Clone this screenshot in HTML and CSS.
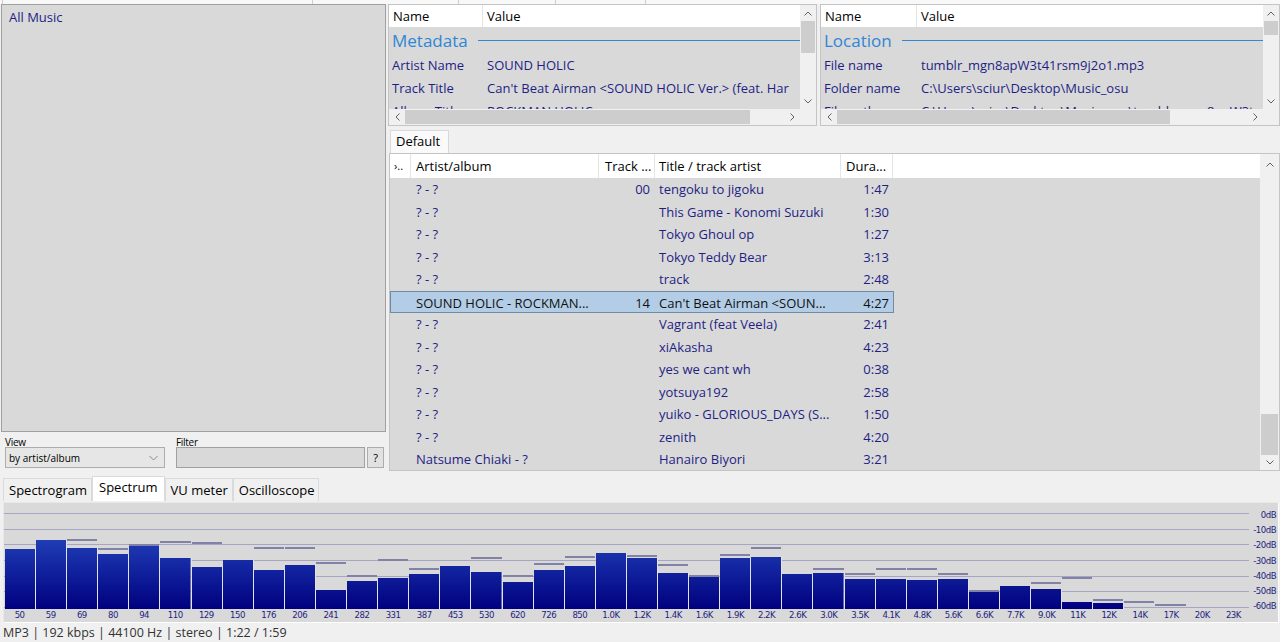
FILE: index.html
```html
<!DOCTYPE html>
<html lang="en">
<head>
  <meta charset="UTF-8">
  <title>foobar2000</title>
  <meta name="viewport" content="width=device-width, initial-scale=1.0">
  <link rel="stylesheet" href="styles.css">
</head>
<body>

  <div class="toolbar-edge">
    <span class="tb tb-1"></span>
    <span class="tb tb-2"></span>
    <span class="tb tb-3"></span>
    <span class="tb tb-4"></span>
    <span class="tb tb-5"></span>
  </div>

  <div class="main">
    <!-- library side -->
    <div class="side">
      <div class="library">
        <div class="lib-item">All Music</div>
      </div>
      <div class="lib-controls">
        <div class="field view-field">
          <div class="field-label">View</div>
          <div class="combo">
            <span>by artist/album</span>
            <svg width="9" height="6" viewBox="0 0 9 6"><path d="M0.5 1 L4.5 5 L8.5 1" fill="none" stroke="#8a8a8a" stroke-width="1"/></svg>
          </div>
        </div>
        <div class="field filter-field">
          <div class="field-label">Filter</div>
          <div class="filter-row">
            <div class="filter-input"></div>
            <div class="help-btn">?</div>
          </div>
        </div>
      </div>
    </div>

    <div class="content">
      <div class="props-row">
        <!-- metadata properties -->
        <div class="props props-left">
          <div class="props-view">
            <div class="lv-header">
              <div class="hcell name-col">Name</div>
              <div class="hcell">Value</div>
            </div>
            <div class="group-row"><span>Metadata</span><i class="group-line"></i></div>
            <div class="prop-row"><span class="name-col">Artist Name</span><span class="val">SOUND HOLIC</span></div>
            <div class="prop-row"><span class="name-col">Track Title</span><span class="val">Can't Beat Airman &lt;SOUND HOLIC Ver.&gt; (feat. Har</span></div>
            <div class="prop-row"><span class="name-col">Album Title</span><span class="val">ROCKMAN HOLIC</span></div>
          </div>
          <div class="vscroll">
            <div class="arrow"><svg width="8" height="5" viewBox="0 0 8 5"><path d="M0.5 4.5 L4 1 L7.5 4.5" fill="none" stroke="#606060"/></svg></div>
            <div class="track"><div class="thumb thumb-meta"></div></div>
            <div class="arrow"><svg width="8" height="5" viewBox="0 0 8 5"><path d="M0.5 0.5 L4 4 L7.5 0.5" fill="none" stroke="#606060"/></svg></div>
          </div>
          <div class="hscroll">
            <div class="arrow"><svg width="5" height="8" viewBox="0 0 5 8"><path d="M4.5 0.5 L1 4 L4.5 7.5" fill="none" stroke="#606060"/></svg></div>
            <div class="track"><div class="thumb hthumb-meta"></div></div>
            <div class="arrow"><svg width="5" height="8" viewBox="0 0 5 8"><path d="M0.5 0.5 L4 4 L0.5 7.5" fill="none" stroke="#606060"/></svg></div>
          </div>
          <div class="corner"></div>
        </div>

        <!-- location properties -->
        <div class="props props-right">
          <div class="props-view">
            <div class="lv-header">
              <div class="hcell name-col">Name</div>
              <div class="hcell">Value</div>
            </div>
            <div class="group-row"><span>Location</span><i class="group-line"></i></div>
            <div class="prop-row"><span class="name-col">File name</span><span class="val">tumblr_mgn8apW3t41rsm9j2o1.mp3</span></div>
            <div class="prop-row"><span class="name-col">Folder name</span><span class="val">C:\Users\sciur\Desktop\Music_osu</span></div>
            <div class="prop-row"><span class="name-col">File path</span><span class="val">C:\Users\sciur\Desktop\Music_osu\tumblr_mgn8apW3t</span></div>
          </div>
          <div class="vscroll">
            <div class="arrow"><svg width="8" height="5" viewBox="0 0 8 5"><path d="M0.5 4.5 L4 1 L7.5 4.5" fill="none" stroke="#606060"/></svg></div>
            <div class="track"><div class="thumb thumb-loc"></div></div>
            <div class="arrow"><svg width="8" height="5" viewBox="0 0 8 5"><path d="M0.5 0.5 L4 4 L7.5 0.5" fill="none" stroke="#606060"/></svg></div>
          </div>
          <div class="hscroll">
            <div class="arrow"><svg width="5" height="8" viewBox="0 0 5 8"><path d="M4.5 0.5 L1 4 L4.5 7.5" fill="none" stroke="#606060"/></svg></div>
            <div class="track"><div class="thumb hthumb-loc"></div></div>
            <div class="arrow"><svg width="5" height="8" viewBox="0 0 5 8"><path d="M0.5 0.5 L4 4 L0.5 7.5" fill="none" stroke="#606060"/></svg></div>
          </div>
          <div class="corner"></div>
        </div>
      </div>

      <div class="playlist-tabs">
        <div class="pl-tab">Default</div>
      </div>

      <div class="playlist">
        <div class="pl-view">
          <div class="pl-header">
            <div class="pcol c0">›..</div>
            <div class="pcol c1">Artist/album</div>
            <div class="pcol c2">Track ...</div>
            <div class="pcol c3">Title / track artist</div>
            <div class="pcol c4">Dura...</div>
          </div>
          <div id="rows"></div>
        </div>
        <div class="vscroll pl-scroll">
          <div class="arrow"><svg width="8" height="5" viewBox="0 0 8 5"><path d="M0.5 4.5 L4 1 L7.5 4.5" fill="none" stroke="#606060"/></svg></div>
          <div class="track"><div class="thumb thumb-pl"></div></div>
          <div class="arrow"><svg width="8" height="5" viewBox="0 0 8 5"><path d="M0.5 0.5 L4 4 L7.5 0.5" fill="none" stroke="#606060"/></svg></div>
        </div>
      </div>
    </div>
  </div>

  <div class="vis-tabs">
    <div class="vtab">Spectrogram</div>
    <div class="vtab active">Spectrum</div>
    <div class="vtab">VU meter</div>
    <div class="vtab">Oscilloscope</div>
  </div>

  <div class="spectrum">
    <div class="spec-main">
      <div class="chart" id="chart"></div>
      <div class="freqs" id="freqs"></div>
    </div>
    <div class="db-scale">
      <span>0dB</span>
      <span>-10dB</span>
      <span>-20dB</span>
      <span>-30dB</span>
      <span>-40dB</span>
      <span>-50dB</span>
      <span>-60dB</span>
    </div>
  </div>

  <div class="status">MP3 | 192 kbps | 44100 Hz | stereo | 1:22 / 1:59</div>

  <script>
    const tracks = [
      ['? - ?', '00', 'tengoku to jigoku', '1:47'],
      ['? - ?', '', 'This Game - Konomi Suzuki', '1:30'],
      ['? - ?', '', 'Tokyo Ghoul op', '1:27'],
      ['? - ?', '', 'Tokyo Teddy Bear', '3:13'],
      ['? - ?', '', 'track', '2:48'],
      ['SOUND HOLIC - ROCKMAN...', '14', 'Can\'t Beat Airman <SOUN...', '4:27', true],
      ['? - ?', '', 'Vagrant (feat  Veela)', '2:41'],
      ['? - ?', '', 'xiAkasha', '4:23'],
      ['? - ?', '', 'yes we cant wh', '0:38'],
      ['? - ?', '', 'yotsuya192', '2:58'],
      ['? - ?', '', 'yuiko - GLORIOUS_DAYS (S...', '1:50'],
      ['? - ?', '', 'zenith', '4:20'],
      ['Natsume Chiaki - ?', '', 'Hanairo Biyori', '3:21']
    ];

    const rows = document.getElementById('rows');
    tracks.forEach(t => {
      const row = document.createElement('div');
      row.className = 'pl-row' + (t[4] ? ' selected' : '');
      const cells = ['', t[0], t[1], t[2], t[3]];
      cells.forEach((text, i) => {
        const c = document.createElement('div');
        c.className = 'pcol c' + i;
        c.textContent = text;
        row.appendChild(c);
      });
      rows.appendChild(row);
    });

    // [label, bar height, peak height] in px above the -60dB line
    const bands = [
      ['50', 60, 0], ['59', 69, 0], ['69', 61, 70], ['80', 55, 61], ['94', 63, 65],
      ['110', 51, 68], ['129', 42, 67], ['150', 49, 0], ['176', 39, 62], ['206', 44, 62],
      ['241', 19, 47], ['282', 28, 34], ['331', 31, 50], ['387', 35, 41], ['453', 43, 0],
      ['530', 37, 52], ['620', 27, 34], ['726', 39, 46], ['850', 43, 53], ['1.0K', 56, 0],
      ['1.2K', 51, 54], ['1.4K', 36, 45], ['1.6K', 32, 34], ['1.9K', 51, 55], ['2.2K', 52, 62],
      ['2.6K', 35, 0], ['3.0K', 36, 41], ['3.5K', 30, 36], ['4.1K', 30, 41], ['4.8K', 29, 41],
      ['5.6K', 30, 36], ['6.6K', 17, 19], ['7.7K', 23, 0], ['9.0K', 20, 27], ['11K', 7, 32],
      ['12K', 6, 10], ['14K', 0, 8], ['17K', 0, 5], ['20K', 0, 0], ['23K', 0, 0]
    ];

    const chart = document.getElementById('chart');
    const freqs = document.getElementById('freqs');
    bands.forEach(b => {
      const col = document.createElement('div');
      col.className = 'band';
      if (b[2] > b[1]) {
        const peak = document.createElement('div');
        peak.className = 'peak';
        peak.style.marginBottom = (b[2] - b[1] - 2) + 'px';
        col.appendChild(peak);
      }
      const bar = document.createElement('div');
      bar.className = 'bar';
      bar.style.height = b[1] + 'px';
      col.appendChild(bar);
      chart.appendChild(col);

      const label = document.createElement('span');
      label.textContent = b[0];
      freqs.appendChild(label);
    });
  </script>

</body>
</html>
```

FILE: styles.css
```css
* {
  box-sizing: border-box;
}

body {
  margin: 0;
  width: 1280px;
  height: 642px;
  overflow: hidden;
  background: #f0f0f0;
  font-family: "Open Sans", "Noto Sans", sans-serif;
  font-size: 13px;
  font-weight: 500;
  color: #1e1e84;
}

/* bottom edge of the toolbar */
.toolbar-edge {
  display: flex;
  height: 4px;
  background: #f8f8f8;
}

.tb {
  border-right: 1px solid #cfcfcf;
}

.tb-1 { width: 3px; }
.tb-2 { width: 310px; }
.tb-3 { width: 146px; }
.tb-4 { width: 97px; }
.tb-5 { width: 90px; }

.main {
  display: flex;
  height: 468px;
}

/* library */
.side {
  width: 386px;
  display: flex;
  flex-direction: column;
}

.library {
  flex: 1;
  margin-left: 1px;
  background: #d9d9d9;
  border: 1px solid #a0a0a0;
  padding: 3px 7px;
}

.lib-item {
  font-size: 13px;
  line-height: 18px;
}

.lib-controls {
  height: 40px;
  display: flex;
  padding: 5px 0 0 5px;
  color: #000;
}

.field-label {
  font-size: 10px;
  line-height: 10px;
  height: 10px;
  letter-spacing: -0.3px;
}

.view-field {
  width: 171px;
}

.combo {
  width: 160px;
  height: 21px;
  background: #e6e6e6;
  border: 1px solid #adadad;
  display: flex;
  align-items: center;
  justify-content: space-between;
  padding: 0 6px 0 3px;
  font-size: 10px;
  font-weight: 400;
}

.filter-row {
  display: flex;
  gap: 2px;
}

.filter-input {
  width: 189px;
  height: 21px;
  background: #d9d9d9;
  border: 1px solid #a0a0a0;
}

.help-btn {
  width: 17px;
  height: 21px;
  background: #e1e1e1;
  border: 1px solid #adadad;
  font-size: 11px;
  line-height: 19px;
  text-align: center;
}

/* right column */
.content {
  flex: 1;
  margin-left: 2px;
  display: flex;
  flex-direction: column;
}

.props-row {
  height: 122px;
  display: flex;
  gap: 3px;
}

.props {
  display: grid;
  grid-template-columns: 1fr 16px;
  grid-template-rows: 1fr 16px;
  border: 1px solid #c4c4c4;
  background: #f0f0f0;
}

.props-left {
  width: 429px;
}

.props-right {
  flex: 1;
}

.props-view {
  overflow: hidden;
  background: #d9d9d9;
  white-space: nowrap;
}

.lv-header {
  display: flex;
  height: 22px;
  background: #fff;
  color: #000;
  font-weight: 400;
  line-height: 22px;
}

.hcell {
  padding-left: 4px;
}

.hcell.name-col {
  border-right: 1px solid #e5e5e5;
}

.props-left .name-col {
  width: 94px;
  flex: none;
}

.props-right .name-col {
  width: 96px;
  flex: none;
}

.group-row {
  height: 27px;
  display: flex;
  align-items: center;
  padding-left: 3px;
  color: #2f86d4;
  font-size: 17px;
  font-weight: 400;
}

.group-line {
  flex: 1;
  height: 1px;
  background: #3388d4;
  margin-left: 10px;
}

.prop-row {
  display: flex;
  height: 23px;
  line-height: 23px;
}

.prop-row .name-col {
  padding-left: 3px;
}

.prop-row .val {
  padding-left: 4px;
}

/* scrollbars */
.vscroll {
  display: flex;
  flex-direction: column;
  background: #f0f0f0;
}

.vscroll .arrow {
  height: 16px;
  display: flex;
  align-items: center;
  justify-content: center;
}

.vscroll .track {
  flex: 1;
  padding: 0 1px;
}

.hscroll {
  display: flex;
  background: #f0f0f0;
}

.hscroll .arrow {
  width: 16px;
  display: flex;
  align-items: center;
  justify-content: center;
}

.hscroll .track {
  flex: 1;
  padding: 1px 0;
}

.thumb {
  background: #cdcdcd;
}

.thumb-meta {
  height: 32px;
}

.thumb-loc {
  height: 14px;
}

.thumb-pl {
  height: 41px;
  margin-top: 242px;
}

.hthumb-meta {
  height: 100%;
  width: 345px;
}

.hthumb-loc {
  height: 100%;
  width: 333px;
}

.corner {
  background: #f0f0f0;
}

/* playlist */
.playlist-tabs {
  margin-top: 4px;
  height: 23px;
  display: flex;
  align-items: flex-end;
}

.pl-tab {
  margin-left: 2px;
  width: 59px;
  height: 23px;
  background: #fafafa;
  border: 1px solid #d9d9d9;
  border-bottom: none;
  color: #000;
  font-weight: 400;
  line-height: 21px;
  padding-left: 5px;
}

.playlist {
  height: 318px;
  margin-left: 1px;
  display: flex;
  border: 1px solid #c4c4c4;
  background: #f0f0f0;
}

.pl-view {
  flex: 1;
  background: #d9d9d9;
  overflow: hidden;
  white-space: nowrap;
}

.pl-header {
  display: flex;
  height: 24px;
  background: #fff;
  color: #000;
  font-weight: 400;
  line-height: 24px;
}

.pl-header .pcol {
  border-right: 1px solid #e5e5e5;
}

.pcol {
  flex: none;
  overflow: hidden;
}

.c0 { width: 21px; padding-left: 4px; font-size: 11px; }
.c1 { width: 188px; padding-left: 5px; }
.c2 { width: 56px; padding: 0 5px 0 6px; }
.c3 { width: 186px; padding-left: 4px; }
.c4 { width: 52px; padding: 0 4px 0 5px; }

.pl-row {
  display: flex;
  height: 22.5px;
  line-height: 22px;
}

.pl-row .c2,
.pl-row .c4 {
  text-align: right;
}

.pl-row.selected {
  width: 504px;
  background: #b3cde6;
  border: 1px solid #6e8aa4;
  color: #111;
}

.pl-row.selected .c0 {
  width: 20px;
}

.pl-scroll {
  width: 19px;
  flex: none;
  padding-top: 3px;
}

/* visualisation tabs */
.vis-tabs {
  display: flex;
  align-items: flex-end;
  height: 25px;
  margin-top: 4px;
  padding-left: 3px;
  font-size: 13px;
  font-weight: 400;
  color: #000;
}

.vtab {
  height: 23px;
  line-height: 22px;
  padding: 0 4px 0 5px;
  background: #f0f0f0;
  border: 1px solid #dadada;
  border-bottom: none;
}

.vtab.active {
  height: 25px;
  line-height: 21px;
  background: #fff;
  padding: 0 6px;
}

/* spectrum */
.spectrum {
  margin: 1px 1px 0 3px;
  height: 121px;
  display: flex;
  background: #d9d9d9;
  border: 1px solid #fff;
  border-left-color: #e8e8e8;
  border-top-color: #e8e8e8;
}

.spec-main {
  width: 1245px;
  display: flex;
  flex-direction: column;
}

.chart {
  height: 106px;
  display: flex;
  align-items: stretch;
  padding-left: 1px;
  background: repeating-linear-gradient(to top, #a6a6c4 0 1px, transparent 1px 15.67px);
  background-position: 0 -1px;
}

.band {
  flex: 1;
  display: flex;
  flex-direction: column;
  justify-content: flex-end;
}

.bar {
  background: linear-gradient(#305ed2, #000080);
  background-size: 100% 106px;
  background-position: bottom;
  border-right: 1px solid #e2e2ea;
}

.peak {
  height: 2px;
  margin-right: 1px;
  background: #8282a8;
}

.freqs {
  height: 12px;
  display: flex;
  font-family: "DejaVu Sans Condensed", "DejaVu Sans", sans-serif;
  font-size: 9.5px;
  font-weight: 400;
  line-height: 12px;
  color: #1e1e80;
  letter-spacing: -0.5px;
}

.freqs span {
  flex: 1;
  text-align: center;
}

.db-scale {
  flex: 1;
  display: flex;
  flex-direction: column;
  align-items: flex-end;
  padding: 6px 2px 0 0;
  gap: 3.2px;
  font-family: "DejaVu Sans Condensed", "DejaVu Sans", sans-serif;
  font-size: 9.5px;
  font-weight: 400;
  line-height: 12px;
  color: #1e1e80;
  letter-spacing: -0.5px;
}

.status {
  height: 19px;
  padding-left: 3px;
  line-height: 19px;
  font-size: 12.5px;
  font-weight: 400;
  color: #333;
}
```
